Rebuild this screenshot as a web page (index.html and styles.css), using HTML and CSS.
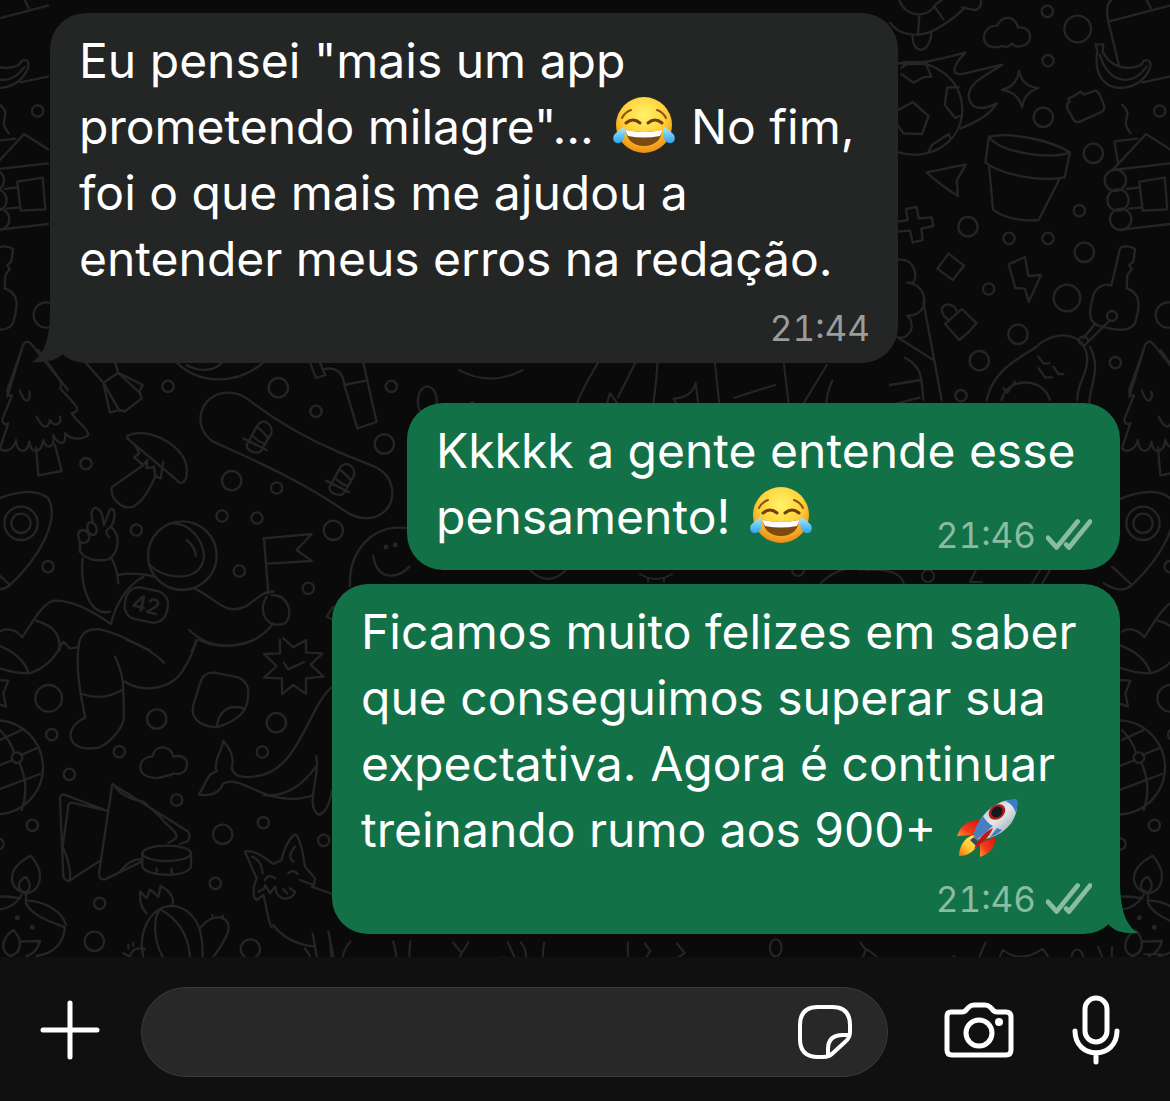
FILE: index.html
```html
<!DOCTYPE html>
<html lang="pt-BR">
<head>
<meta charset="utf-8">
<meta name="viewport" content="width=device-width, initial-scale=1">
<title>Conversa</title>
<link rel="stylesheet" href="styles.css">
</head>
<body>
<svg class="defs" aria-hidden="true">
  <defs>
    <radialGradient id="face" cx="50%" cy="32%" r="68%">
      <stop offset="0" stop-color="#fff36b"/><stop offset=".55" stop-color="#ffd23a"/><stop offset="1" stop-color="#ee8b12"/>
    </radialGradient>
    <linearGradient id="tear" x1="0" y1="0" x2="0" y2="1">
      <stop offset="0" stop-color="#a9e9ff"/><stop offset="1" stop-color="#2ba4ee"/>
    </linearGradient>
    <linearGradient id="body" x1="0" y1="0" x2="1" y2="1">
      <stop offset="0" stop-color="#a8b4bd"/><stop offset=".5" stop-color="#e4e8ea"/><stop offset="1" stop-color="#7f8b96"/>
    </linearGradient>
    <linearGradient id="fin" x1="1" y1="0" x2="0" y2="1">
      <stop offset="0" stop-color="#d3150f"/><stop offset=".6" stop-color="#f33a1c"/><stop offset="1" stop-color="#ff9a28"/>
    </linearGradient>
    <linearGradient id="flame" x1="1" y1="0" x2="0" y2="1">
      <stop offset="0" stop-color="#fff27a"/><stop offset=".6" stop-color="#ffc62c"/><stop offset="1" stop-color="#f36a16"/>
    </linearGradient>
    <symbol id="joy" viewBox="0 0 62 58">
      <circle cx="31" cy="29" r="28" fill="url(#face)"/>
      <path d="M9 22q3-6 9-8M53 22q-3-6-9-8" fill="none" stroke="#8a5212" stroke-width="2" stroke-linecap="round"/>
      <path d="M13 27q7-6 14 0M35 27q7-6 14 0" fill="none" stroke="#6f3f0c" stroke-width="3" stroke-linecap="round"/>
      <path d="M13 34q18 4 36 0c0 9-7 16-18 16s-18-7-18-16z" fill="#7a4a10"/>
      <path d="M13 34q18 4 36 0c0 3-1 4-2 6q-16 3-32 0c-1-2-2-3-2-6z" fill="#fff"/>
      <path d="M11 31c2 5 1 15-5 16-5 1-7-4-5-8 2-3 6-5 10-8zM51 31c-2 5-1 15 5 16 5 1 7-4 5-8-2-3-6-5-10-8z" fill="url(#tear)"/>
    </symbol>
    <symbol id="rocket" viewBox="0 0 62 58">
      <path d="M24 21C12 21 5 26 1 37l16-1z" fill="url(#fin)"/>
      <path d="M39 38c1 9-4 16-15 20l0-14z" fill="url(#fin)"/>
      <path d="M17 36C8 39 3 48 3 57c8 0 16-4 20-14z" fill="url(#flame)"/>
      <path d="M18 38l6 6-4 3-6-6z" fill="#3d4650"/>
      <path d="M61 1C44-1 24 12 18 36l5 5C48 38 63 22 61 1z" fill="url(#body)"/>
      <path d="M27 17c-5 6-8 12-9 19l4 4 15-13c-4-2-8-6-10-10zM34 38c5-1 9-4 12-7l-5-2z" fill="#487ec0"/>
      <path d="M61 1c-4-1-9 0-13 1 6 1 10 6 12 12 1-5 2-9 1-13z" fill="#3c7bc5"/>
      <path d="M37 29C28 33 22 40 18 50c7-5 15-11 19-21z" fill="#c01818"/>
      <ellipse cx="41" cy="13" rx="9" ry="7" fill="#b3181b" transform="rotate(-38 41 13)"/>
      <ellipse cx="41" cy="13" rx="6" ry="5" fill="#15181d" transform="rotate(-38 41 13)"/>
    </symbol>
    <symbol id="ticks" viewBox="0 0 48 34">
      <path d="M2 20L11 30L33 3M21 27L24 30L46 3" fill="none" stroke="currentColor" stroke-width="5" stroke-linecap="round" stroke-linejoin="round"/>
    </symbol>
  </defs>
</svg>

<div class="app">
  <main class="chat">
    <svg class="wallpaper" aria-hidden="true">
      <g id="doodles-right" transform="translate(890 0) scale(.33333)">
        <path d="M0 68C30 112 90 110 130 92C170 70 205 45 225 22M28 0C45 50 110 60 138 12L155 0M88 46L84 104M134 20L160 58M68 105C65 165 120 165 124 98M215 22L255 30C272 28 275 10 272 0"/>
        <path d="M297 138C270 125 280 75 322 77C335 45 375 45 384 83C430 75 435 140 385 139C375 143 370 132 365 130C355 145 345 140 335 138C320 143 305 142 297 138Z"/>
        <path d="M25 190C120 170 215 230 217 330C215 430 115 485 25 457M25 190C90 195 160 175 226 158C180 205 185 230 225 220L337 194C270 235 240 250 236 285C240 340 290 325 320 310C300 345 260 365 212 385M34 204L50 192H108L124 230L100 232L70 248L34 222M206 262L172 262L164 315L196 354L210 348M25 330L68 306L116 348L96 402L40 400L25 378M114 458L126 434L176 402L180 412"/>
        <path d="M387 213C395 245 410 260 445 264C415 275 402 290 396 322C388 290 370 275 336 270C365 262 383 245 387 213Z"/>
        <path d="M540 304L534 296L552 288L572 275L582 284L612 273Q622 270 628 282L642 315Q646 330 634 336L570 365Q556 370 550 358L532 325Q528 308 540 304Z"/>
        <path d="M664 0C650 10 648 30 655 65L688 200M655 65L840 17M770 0L782 24M757 247L840 230M622 155L617 133H640L638 155C660 200 710 215 752 195L762 182C785 175 785 195 775 215C735 290 600 285 622 155ZM630 165C650 240 720 270 770 200M697 315C735 350 685 355 722 400"/>
        <path d="M297 410C360 395 480 420 540 457C490 480 330 460 297 410L286 487C340 530 470 545 524 532L540 457M297 495L309 628C340 655 400 665 446 660L508 538"/>
        <path d="M110 517C150 510 190 500 227 494L200 542L204 588C175 570 140 545 110 517ZM25 665L53 660L48 627L80 621L86 655L125 652L130 678L94 686L98 720L68 728L60 692L25 695"/>
        <path d="M668 510L768 402L840 448M668 510L840 490M684 488L673 424L742 416M748 545L824 533L832 628L758 632ZM710 567L748 562M715 626L755 622M700 688L840 672"/>
        <circle cx="676" cy="541" r="32"/><circle cx="684" cy="600" r="32"/><circle cx="692" cy="658" r="32"/>
        <path d="M176 761L222 797L188 840L142 806ZM356 793L405 771L415 828L453 825L416 906L405 866L376 864ZM216 927L260 970Q235 1000 208 1020L165 972ZM178 962C120 920 190 890 202 938"/>
        <path d="M25 779C70 775 85 820 70 848H52C120 855 120 950 52 947C80 975 60 1020 22 1012L130 1080M100 905L155 1200M45 1073C95 1100 95 1130 100 1200M0 1155L92 1140"/>
        <path d="M664 857L690 745C700 735 730 740 735 748L730 785L718 795L725 808L712 825L710 865M710 865C755 880 750 920 735 970C715 1000 670 990 620 975C590 960 600 920 612 880C625 855 650 850 664 857M617 970L580 1015M660 960L595 1025"/>
        <circle cx="666" cy="948" r="15"/><circle cx="580" cy="1022" r="13"/>
        <path d="M290 1200C310 1110 380 1080 440 1040C490 990 590 990 592 1080C590 1130 560 1150 562 1200M600 1040C635 1110 600 1150 598 1210M335 1200C350 1130 460 1130 480 1200M445 1070L460 1090L478 1090M446 1105L465 1132L486 1132M490 1100L505 1122L520 1122M340 1165L352 1178L375 1145"/>
        <path d="M718 1190L765 1035Q778 1015 792 1035L900 1170"/>
        <circle cx="563" cy="87" r="40"/><circle cx="531" cy="894" r="40"/><circle cx="835" cy="945" r="38"/>
        <circle cx="460" cy="352" r="29"/><circle cx="610" cy="460" r="29"/><circle cx="234" cy="680" r="29"/><circle cx="583" cy="757" r="29"/><circle cx="384" cy="1003" r="29"/><circle cx="268" cy="1082" r="29"/>
        <circle cx="472" cy="34" r="17"/><circle cx="474" cy="182" r="17"/><circle cx="809" cy="333" r="17"/><circle cx="568" cy="632" r="17"/><circle cx="357" cy="715" r="17"/><circle cx="474" cy="715" r="17"/><circle cx="296" cy="867" r="17"/><circle cx="676" cy="1088" r="17"/><circle cx="213" cy="1187" r="17"/>
      </g>
      <use href="#doodles-right" x="-1122"/>
      <g id="doodles-left">
        <g transform="translate(0 350) scale(.33333)">
          <path d="M65 0L22 120C20 135 30 140 36 136L8 205C5 220 15 225 25 220L0 295C15 310 40 300 48 270C50 315 85 310 88 275C92 315 125 310 130 270C140 305 165 290 160 255C175 285 200 290 195 250C220 275 255 265 265 255C265 235 235 220 215 190C250 180 225 165 180 115C190 100 185 95 115 0M60 122C75 170 95 150 88 125M110 200C130 240 145 235 150 210C165 235 185 220 180 200M108 292L115 376L185 363L165 285"/>
          <path d="M255 35L310 98L330 188L358 180L375 184L425 145L418 125L428 105L355 68L345 38M355 68L310 98L358 182M358 72L418 127"/>
          <path d="M382 258C440 225 570 290 560 370C560 400 540 405 530 390L382 265ZM430 345L335 412C330 450 370 480 400 470C440 445 455 400 468 375M405 285L418 310L402 322L430 345L442 330L440 355L462 350L465 378L482 385L490 335"/>
          <path d="M690 128C600 125 570 230 640 275C760 330 900 390 1030 480C1120 545 1210 470 1165 385C1140 345 1090 340 1020 308C930 270 840 220 760 160C735 140 720 130 690 128Z"/>
          <g id="binding"><path d="M740 285L770 230C785 200 820 220 814 250L785 300C775 315 740 305 740 285M770 230Q790 245 805 265M755 255Q775 275 792 280M730 265L800 300"/></g>
          <use href="#binding" x="248" y="127"/>
          <path d="M530 38C600 105 710 105 790 38M560 45C600 70 650 60 665 38M930 38L948 84L976 75L960 38M975 57C1010 50 1030 70 1033 105L1072 235L1130 216L1090 38M1033 105L1097 92"/>
          <circle cx="63" cy="520" r="50"/><circle cx="63" cy="520" r="29"/>
          <path d="M-90 500C-20 440 90 400 145 445C180 510 120 620 30 705C0 730 -30 715 -55 700M-30 650L30 705"/>
          <path d="M240 575C230 555 235 540 250 540C270 545 275 570 255 578Q245 580 240 575L240 605C260 630 290 635 325 628C355 610 365 560 333 530C315 540 315 550 328 562M262 530C262 510 285 515 290 535C292 560 270 560 263 540ZM280 520C265 480 285 455 305 490L312 525L330 478C350 470 345 510 333 530"/>
          <path d="M248 625C240 700 265 800 330 785M333 622Q352 655 355 700M355 675Q400 665 465 680M430 680C375 710 345 770 333 822C260 770 200 750 160 752C130 760 100 810 67 862C50 840 20 830 0 845M108 812C170 830 180 860 180 900M175 895L190 875L210 895L235 892C240 850 260 835 300 838C360 850 400 880 450 900"/>
          <circle cx="547" cy="617" r="103"/>
          <path d="M520 520C570 520 610 570 612 620C605 700 490 690 450 645M560 570Q585 590 588 618M580 715C640 735 670 800 735 770C770 750 790 720 822 725M790 565L935 552L890 600L935 633L805 641M792 565L805 730M815 735C870 735 880 800 855 820C790 840 775 770 800 740M568 840C640 910 760 900 820 820M590 870L575 905"/>
          <rect x="375" y="717" width="128" height="96" rx="40" transform="rotate(12 438 765)"/>
          <text class="wallpaper-number" x="438" y="788" transform="rotate(14 438 765)">42</text>
          <path d="M1225 535C1120 520 1045 600 1050 710M1120 618C1130 690 1190 690 1228 650M1000 770L980 800L995 808"/>
          <circle cx="1158" cy="591" r="4"/><circle cx="1186" cy="585" r="4"/>
          <circle cx="835" cy="113" r="29"/><circle cx="1153" cy="282" r="29"/><circle cx="695" cy="392" r="29"/><circle cx="1000" cy="541" r="29"/>
          <circle cx="504" cy="109" r="17"/><circle cx="948" cy="184" r="17"/><circle cx="1174" cy="109" r="17"/><circle cx="258" cy="341" r="17"/><circle cx="830" cy="414" r="17"/><circle cx="666" cy="498" r="17"/><circle cx="771" cy="504" r="17"/><circle cx="409" cy="540" r="17"/><circle cx="718" cy="663" r="17"/><circle cx="925" cy="715" r="17"/><circle cx="144" cy="650" r="17"/>
        </g>
        <g transform="translate(0 640) scale(.33333)">
          <path d="M-130 0C-60 -10 60 20 85 98M-120 20C-60 70 20 100 85 100C130 90 170 50 185 10M238 0C225 80 240 160 256 233C220 250 205 275 215 300C225 325 260 330 300 322C340 300 370 260 372 230L370 150C370 110 360 80 345 50M245 162Q310 185 370 148M375 125C430 160 520 150 555 80Q575 50 590 0M380 0Q450 25 492 68M598 0Q670 35 760 0"/>
          <path d="M840 0V40L792 42L830 78L792 113L846 115V162L880 135L918 162V115L970 110L932 74L968 40L918 38V0L880 22L850 -5M852 68L864 88L912 66"/>
          <path d="M640 97L715 112C745 125 750 150 742 185C735 230 690 250 650 262C600 260 570 235 580 195L600 130C605 110 620 98 640 97ZM650 262C655 220 680 190 730 205"/>
          <path d="M-10 120L25 122L10 160L18 200L-10 190"/>
          <circle cx="-12" cy="382" r="141"/><circle cx="51" cy="353" r="16"/>
          <path d="M65 270L0 300M110 325L62 345M38 360L-50 395M0 270Q30 300 42 337M58 368Q90 440 65 510M120 402L-60 470"/>
          <path d="M455 412C400 405 420 345 457 350C465 310 515 315 520 350C580 335 570 415 520 400C510 410 500 405 490 410Q470 418 455 412Z"/>
          <path d="M998 140C920 200 900 400 760 410C720 415 700 405 695 385C705 350 690 325 670 303C665 335 640 360 650 395C620 400 620 430 596 464C640 470 660 455 670 430C710 410 760 455 820 470Q890 485 940 465M790 465Q880 475 948 380M948 348C965 400 910 500 958 525C985 510 990 480 996 450"/>
          <path d="M320 512L190 463Q178 465 180 480L190 710Q200 730 215 718L300 662M320 512L215 488Q202 490 204 505L188 620Q215 680 210 720M337 432L297 700Q297 720 315 718L425 665M337 432L565 575Q575 595 560 605L540 612M345 440Q370 475 430 485L480 530C500 560 530 570 530 590Q525 600 505 608M360 695Q390 655 425 658"/>
          <ellipse cx="500" cy="640" rx="73" ry="23"/><path d="M427 640V680C440 710 560 715 573 680V640M470 685V700M515 685V700"/>
          <path d="M92 647C140 700 120 760 75 760C30 750 10 690 92 647ZM78 711C100 740 85 760 70 755C45 745 60 715 78 711ZM78 760V790C100 830 150 845 195 862C190 910 160 940 110 948M85 782C130 785 185 810 198 855M65 765Q40 805 0 808M60 775Q30 768 -10 770M40 870C70 900 65 940 30 948C-5 930 10 890 40 870ZM60 905L120 903Q110 940 80 948"/>
          <path d="M440 820C420 800 420 780 420 755L440 775L450 748L475 770L482 738C515 755 525 780 515 800M430 950C415 890 440 800 520 797C590 810 610 870 608 950M480 808C455 840 465 910 488 950M480 808C540 840 565 890 570 950M600 865C640 810 700 830 683 880Q665 920 640 950M370 940L390 950C395 930 410 920 435 928M385 915V925M400 908V918M637 825V835M668 827V835"/>
          <path d="M770 715L735 635Q760 625 820 672L845 660C855 610 880 580 890 585C910 620 910 660 915 680L945 715L942 735L900 720M770 715C755 750 760 775 770 780L790 765C800 800 805 850 815 862M755 650Q785 660 788 700M885 620Q860 650 880 665M795 720Q805 700 825 715M865 700Q880 685 893 702M775 755Q800 745 795 735L810 760L825 740C830 790 880 780 885 755L870 745M850 748L862 760M935 740L998 762M820 855Q860 910 945 920M938 880L950 948M985 875L1000 948M915 925L930 948"/>
          <circle cx="146" cy="175" r="40"/><circle cx="470" cy="237" r="29"/><circle cx="829" cy="248" r="29"/><circle cx="668" cy="583" r="29"/><circle cx="283" cy="904" r="29"/><circle cx="751" cy="927" r="29"/>
          <circle cx="155" cy="284" r="17"/><circle cx="358" cy="335" r="17"/><circle cx="208" cy="403" r="17"/><circle cx="787" cy="336" r="17"/><circle cx="530" cy="480" r="17"/><circle cx="790" cy="548" r="17"/><circle cx="971" cy="601" r="17"/><circle cx="97" cy="556" r="17"/><circle cx="646" cy="730" r="17"/><circle cx="299" cy="790" r="17"/><circle cx="-6" cy="612" r="17"/>
          <circle cx="52" cy="833" r="4"/><circle cx="97" cy="862" r="4"/>
        </g>
      </g>
      <use href="#doodles-left" x="1122"/>
      <g transform="translate(340 350) scale(.5293)" class="strip">
        <path d="M225 38Q285 70 345 38M190 155L250 98L280 135L265 160M210 155L262 110M432 155Q440 100 490 20M462 155L465 130L490 150L510 82L543 125L525 160M525 90L560 20M600 20Q595 110 578 158M630 92Q665 90 672 62C675 100 680 115 692 132Q665 135 648 155C650 130 645 110 630 92M708 20L722 155M745 90L822 66M838 20L852 140L920 28M850 155L860 140M930 58Q910 100 925 155M1010 112L1095 90M1010 112V135L1030 150M945 155Q965 135 985 150Q1020 130 1055 155"/>
        <ellipse cx="165" cy="97" rx="18" ry="28"/><ellipse cx="370" cy="132" rx="18" ry="27"/>
      </g>
      <path d="M792 570A6 6 0 0 0 804 570M820 584Q840 564 862 570M866 570Q900 568 904 584M976 570L970 582H982M1040 570L1032 584M1050 570L1042 584M640 574Q656 584 672 574M648 578V582M664 578V582M530 570Q548 588 566 570"/>
      <circle cx="928" cy="576" r="6"/>
      <g transform="translate(330 920) scale(.5357)" class="strip">
        <path d="M0 40Q5 80 0 108M38 40C20 60 20 85 24 108Q50 110 84 72M118 40Q130 75 116 108M150 40Q145 75 154 108M230 42L246 62L230 88M246 62L258 42M282 108C295 60 350 55 376 108M332 42L344 68M356 42Q372 60 362 84M400 42Q392 80 408 108M522 70L514 108M524 90V108M556 42V108M588 44L598 58L586 76Q600 80 600 96L620 84L626 106M648 44L662 62L650 70Q668 90 644 106M708 108C700 75 720 60 748 102C770 85 790 90 802 108M872 108C870 60 915 60 918 108M990 42L1000 56L984 100M978 106Q1000 108 1004 92L1032 104C1036 80 1020 65 1000 54M1138 102C1136 70 1150 70 1158 96C1156 60 1172 60 1170 88L1182 98M1206 108Q1205 80 1224 42M1210 74L1268 108M1236 100L1256 56Q1290 82 1330 54Q1350 75 1348 108M1434 50L1456 106L1480 96M1460 50Q1455 90 1484 104M1520 64H1552Q1545 100 1525 106"/>
        <ellipse cx="832" cy="52" rx="11" ry="16"/><ellipse cx="1094" cy="88" rx="10" ry="17"/><ellipse cx="1395" cy="72" rx="11" ry="17"/>
      </g>
    </svg>

    <article class="bubble bubble--in bubble--first">
      <p>Eu pensei "mais um app prometendo milagre"... <svg class="emoji" role="img" aria-label="😂"><use href="#joy"/></svg> No fim, foi o que mais me ajudou a entender meus erros na redação.<span class="meta meta--below"><time>21:44</time></span></p>
      <svg class="tail tail--left" viewBox="0 0 34 54" aria-hidden="true"><path d="M18 0C18 26 14 44 0 53C13 54 24 52 32 44L30 0Z"/></svg>
    </article>

    <article class="bubble bubble--out bubble--short">
      <p>Kkkkk a gente entende esse pensamento! <svg class="emoji" role="img" aria-label="😂"><use href="#joy"/></svg><span class="meta"><time>21:46</time><svg class="ticks" aria-hidden="true"><use href="#ticks"/></svg></span></p>
    </article>

    <article class="bubble bubble--out bubble--long">
      <p>Ficamos muito felizes em saber que conseguimos superar sua expectativa. Agora é continuar treinando rumo aos 900+ <svg class="emoji" role="img" aria-label="🚀"><use href="#rocket"/></svg><span class="meta meta--below"><time>21:46</time><svg class="ticks" aria-hidden="true"><use href="#ticks"/></svg></span></p>
      <svg class="tail tail--right" viewBox="0 0 34 54" aria-hidden="true"><path d="M16 0C16 26 20 44 34 53C21 54 11 52 4 44L4 0Z"/></svg>
    </article>
  </main>

  <footer class="composer">
    <button class="icon-button" type="button" aria-label="Anexar">
      <svg width="60" height="60" viewBox="0 0 60 60"><path d="M30 3V57M3 30H57" stroke-width="5"/></svg>
    </button>
    <div class="field">
      <input type="text" aria-label="Mensagem">
      <button class="icon-button" type="button" aria-label="Figurinhas">
        <svg width="56" height="56" viewBox="0 0 56 56"><path d="M21 3H35Q53 3 53 21V28Q53 34 48 38L36 49Q32 53 26 53H21Q3 53 3 35V21Q3 3 21 3ZM52 31H46Q31 31 31 45V52" stroke-width="4"/></svg>
      </button>
    </div>
    <button class="icon-button" type="button" aria-label="Câmera">
      <svg width="70" height="56" viewBox="0 0 70 56"><path d="M7 10H18Q21 10 23 7L25 5Q27 3 30 3H41Q44 3 46 5L48 7Q50 10 53 10H62Q67 10 67 15V48Q67 53 62 53H8Q3 53 3 48V14Q3 10 7 10Z" stroke-width="5"/><circle cx="35" cy="31" r="13" stroke-width="5"/><circle class="dot" cx="55" cy="20" r="4"/></svg>
    </button>
    <button class="icon-button" type="button" aria-label="Gravar áudio">
      <svg width="48" height="70" viewBox="0 0 48 70"><rect x="13" y="3" width="22" height="44" rx="11" stroke-width="5"/><path d="M3 36C3 65 45 65 45 36M24 58V67" stroke-width="5"/></svg>
    </button>
  </footer>
</div>
</body>
</html>
```

FILE: styles.css
```css
* {
  box-sizing: border-box;
}

body {
  margin: 0;
  background: #0a0a0a;
  color: #fff;
  font-family: Inter, "Liberation Sans", sans-serif;
}

.defs {
  position: absolute;
  width: 0;
  height: 0;
}

.app {
  display: flex;
  flex-direction: column;
  min-height: 100vh;
}

.chat {
  position: relative;
  flex: 1;
  display: flex;
  flex-direction: column;
  padding: 13px 50px 23px;
  overflow: hidden;
}

.wallpaper {
  position: absolute;
  inset: 0;
  width: 100%;
  height: 100%;
  fill: none;
  stroke: #252525;
  stroke-width: 2;
  stroke-linejoin: round;
  stroke-linecap: round;
}

.wallpaper g {
  stroke-width: 7;
}

.wallpaper .strip {
  stroke-width: 4;
}

.wallpaper-number {
  fill: #252525;
  stroke: none;
  font-size: 66px;
  font-weight: 600;
  text-anchor: middle;
}

.bubble {
  position: relative;
  max-width: 100%;
  padding: 15px 28px 13px 29px;
  border-radius: 36px;
}

.bubble p {
  display: flow-root;
  margin: 0;
  font-size: 48px;
  line-height: 66px;
}

.bubble--in {
  align-self: flex-start;
  background: #232625;
  color: #fff;
}

.bubble--out {
  align-self: flex-end;
  background: #137147;
}

.bubble--first {
  width: 848px;
  margin-bottom: 40px;
}

.bubble--short {
  width: 713px;
  margin-bottom: 14px;
}

.bubble--long {
  width: 788px;
}

.emoji {
  width: 62px;
  height: 58px;
  margin: 0 2px 0 6px;
  vertical-align: -10px;
}

.meta {
  float: right;
  display: flex;
  align-items: center;
  gap: 10px;
  margin-top: 29px;
  font-size: 35px;
  font-variant-numeric: tabular-nums;
  line-height: 44px;
  color: #9b9d9c;
}

.meta--below {
  margin-top: 14px;
}

.bubble--out .meta {
  color: #89bca0;
}

.ticks {
  width: 46px;
  height: 34px;
}

.tail {
  position: absolute;
  bottom: 0;
  width: 34px;
  height: 54px;
}

.tail--left {
  left: -18px;
  fill: #232625;
}

.tail--right {
  right: -18px;
  fill: #137147;
}

.composer {
  display: flex;
  align-items: center;
  padding: 30px 50px 24px 40px;
  background: #101010;
}

.composer > .icon-button {
  padding-bottom: 4px;
}

.field {
  flex: 1;
  display: flex;
  align-items: center;
  min-width: 0;
  height: 90px;
  margin: 0 56px 0 41px;
  padding: 0 34px;
  border: 1px solid #3a3a3a;
  border-radius: 45px;
  background: #282828;
}

.field input {
  flex: 1;
  min-width: 0;
  height: 66px;
  padding: 0;
  border: 0;
  outline: 0;
  background: transparent;
  color: #fff;
  font: inherit;
  font-size: 48px;
}

.icon-button {
  display: flex;
  flex: none;
  padding: 0;
  border: 0;
  background: none;
}

.icon-button svg {
  fill: none;
  stroke: #fff;
  stroke-linecap: round;
  stroke-linejoin: round;
}

.icon-button .dot {
  fill: #fff;
  stroke: none;
}

.composer > .icon-button:last-child {
  margin-left: 58px;
}
```
